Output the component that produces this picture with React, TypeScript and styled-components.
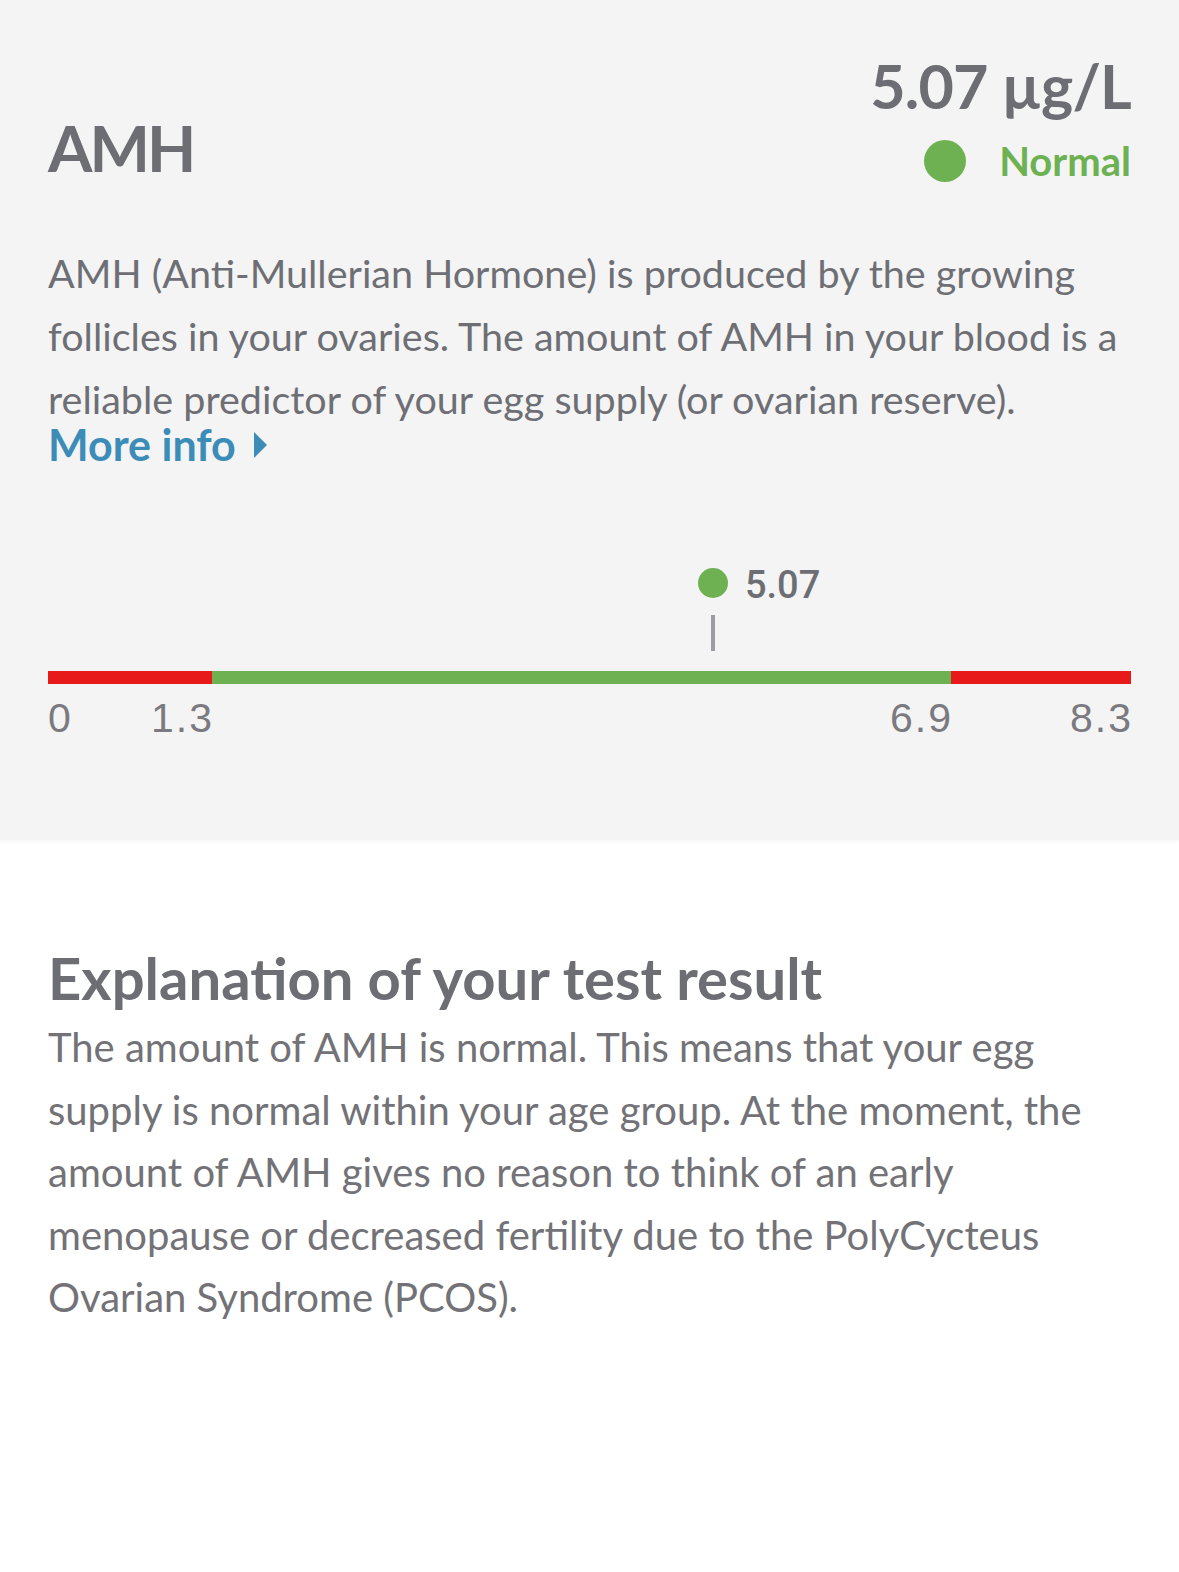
import styled, { createGlobalStyle } from "styled-components";

const GlobalStyle = createGlobalStyle`
  html, body {
    margin: 0;
    padding: 0;
    background: #ffffff;
  }
  body {
    font-family: Lato, "Noto Sans", sans-serif;
    color: #6e6f74;
    -webkit-font-smoothing: antialiased;
  }
`;

const Page = styled.div`
  width: 1179px;
  min-height: 1572px;
  background: #ffffff;
`;

const Panel = styled.section`
  background: #f4f4f4;
  padding: 54px 48px 102px;
  box-shadow: 0 2px 3px rgba(0, 0, 0, 0.03);
`;

const Header = styled.div`
  display: flex;
  justify-content: space-between;
  align-items: flex-end;
`;

const Title = styled.h1`
  margin: 0 0 5px;
  font-size: 64px;
  line-height: 64px;
  font-weight: 700;
  letter-spacing: -3px;
  color: #6d6e73;
`;

const Result = styled.div`
  display: flex;
  flex-direction: column;
  align-items: flex-end;
`;

const Value = styled.div`
  font-size: 61px;
  line-height: 64px;
  font-weight: 700;
  letter-spacing: -0.8px;
  color: #6d6e73;
`;

const Status = styled.div`
  display: flex;
  align-items: center;
  gap: 33px;
  margin-top: 19px;
  font-size: 40px;
  line-height: 48px;
  font-weight: 700;
  color: #6db152;
`;

const Dot = styled.span<{ $size: number }>`
  display: block;
  width: ${p => p.$size}px;
  height: ${p => p.$size}px;
  border-radius: 50%;
  background: #6db152;
  flex: none;
`;

const Description = styled.p`
  margin: 56px 0 0;
  font-size: 39.5px;
  line-height: 63px;
  font-weight: 400;
  color: #6e6f74;
`;

const MoreInfo = styled.a`
  display: flex;
  align-items: center;
  gap: 17px;
  margin-top: -9px;
  font-size: 43px;
  line-height: 48px;
  font-weight: 700;
  color: #3c8cb8;
  text-decoration: none;
`;

const Chart = styled.div`
  margin-top: 99px;
`;

const MarkerArea = styled.div`
  position: relative;
  height: 103px;
`;

const Marker = styled.div`
  position: absolute;
  top: 0;
  margin-left: -15px;
  display: flex;
  align-items: flex-start;
  gap: 17px;
`;

const MarkerValue = styled.span`
  margin-top: 2px;
  font-family: Roboto, "Liberation Sans", sans-serif;
  font-size: 38px;
  line-height: 30px;
  font-weight: 500;
  color: #6d6e73;
`;

const Tick = styled.span`
  position: absolute;
  top: 47px;
  left: 13px;
  width: 4px;
  height: 36px;
  background: #9c9ca2;
`;

const Bar = styled.div`
  display: flex;
  height: 13px;
`;

const Segment = styled.div<{ $color: string }>`
  background: ${p => p.$color};
`;

const Labels = styled.div`
  position: relative;
  height: 40px;
  margin-top: 14px;
`;

const Label = styled.span<{ $alignRight?: boolean }>`
  position: absolute;
  top: 0;
  transform: ${p => (p.$alignRight ? "translateX(-100%)" : "none")};
  margin-left: ${p => (p.$alignRight ? "2px" : "0")};
  font-family: "Liberation Sans", Arial, sans-serif;
  font-size: 41px;
  line-height: 40px;
  letter-spacing: 2px;
  color: #7a7a80;
`;

const Explanation = styled.section`
  padding: 106px 48px 0;
`;

const Heading = styled.h2`
  margin: 0;
  font-size: 58px;
  line-height: 64px;
  font-weight: 700;
  color: #6d6e73;
`;

const Body = styled.p`
  margin: 6px 0 0;
  font-size: 40px;
  line-height: 62.5px;
  font-weight: 400;
  color: #727277;
`;

// positions along the bar as they appear in the design (share of bar width)
const stops = [
  { label: "0", at: 0 },
  { label: "1.3", at: 0.1514 },
  { label: "6.9", at: 0.8338 },
  { label: "8.3", at: 1 },
];
const RESULT = { value: "5.07", at: 0.614 };

const pct = (f: number) => `${f * 100}%`;

function RangeChart() {
  const [, low, high] = stops;
  return (
    <Chart>
      <MarkerArea>
        <Marker style={{ left: pct(RESULT.at) }}>
          <Dot $size={30} />
          <MarkerValue>{RESULT.value}</MarkerValue>
          <Tick />
        </Marker>
      </MarkerArea>
      <Bar>
        <Segment $color="#e8191b" style={{ width: pct(low.at) }} />
        <Segment $color="#6db152" style={{ width: pct(high.at - low.at) }} />
        <Segment $color="#e8191b" style={{ width: pct(1 - high.at) }} />
      </Bar>
      <Labels>
        {stops.map(s => (
          <Label key={s.label} $alignRight={s.at > 0} style={{ left: pct(s.at) }}>
            {s.label}
          </Label>
        ))}
      </Labels>
    </Chart>
  );
}

export default function App() {
  return (
    <Page>
      <GlobalStyle />
      <Panel>
        <Header>
          <Title>AMH</Title>
          <Result>
            <Value>5.07 µg/L</Value>
            <Status>
              <Dot $size={42} />
              Normal
            </Status>
          </Result>
        </Header>

        <Description>
          AMH (Anti-Mullerian Hormone) is produced by the growing<br />
          follicles in your ovaries. The amount of AMH in your blood is a<br />
          reliable predictor of your egg supply (or ovarian reserve).
        </Description>
        <MoreInfo href="#">
          More info
          <svg width="15" height="28" viewBox="0 0 15 28">
            <path d="M1 1 L14 14 L1 27 Z" fill="#3c8cb8" />
          </svg>
        </MoreInfo>

        <RangeChart />
      </Panel>

      <Explanation>
        <Heading>Explanation of your test result</Heading>
        <Body>
          The amount of AMH is normal. This means that your egg<br />
          supply is normal within your age group. At the moment, the<br />
          amount of AMH gives no reason to think of an early<br />
          menopause or decreased fertility due to the PolyCycteus<br />
          Ovarian Syndrome (PCOS).
        </Body>
      </Explanation>
    </Page>
  );
}
